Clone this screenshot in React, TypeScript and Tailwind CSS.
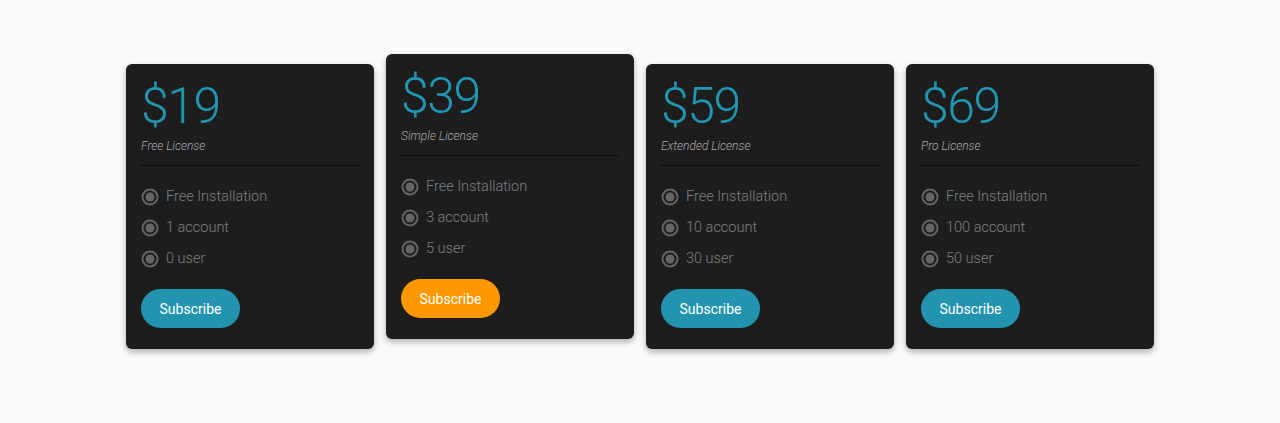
const plans = [
  { price: "$19", name: "Free License", items: ["Free Installation", "1 account", "0 user"], featured: false },
  { price: "$39", name: "Simple License", items: ["Free Installation", "3 account", "5 user"], featured: true },
  { price: "$59", name: "Extended License", items: ["Free Installation", "10 account", "30 user"], featured: false },
  { price: "$69", name: "Pro License", items: ["Free Installation", "100 account", "50 user"], featured: false },
];

function Radio() {
  return (
    <svg width="18" height="18" viewBox="0 0 18 18" className="shrink-0">
      <circle cx="9" cy="9" r="7.5" fill="none" stroke="#666" strokeWidth="2" />
      <circle cx="9" cy="9" r="4.5" fill="#666" />
    </svg>
  );
}

export default function App() {
  return (
    <div className="min-h-[423px] w-full bg-[#fafafa] font-['Roboto',sans-serif]">
      <div className="flex items-start justify-center gap-3 pt-16">
        {plans.map(({ price, name, items, featured }) => (
          <div
            key={price}
            className={`w-[248px] h-[285px] rounded-md bg-[#1d1d1d] px-[15px] pt-[14px] shadow-[0_3px_6px_rgba(0,0,0,0.3)] ${
              featured ? "-mt-[10px]" : ""
            }`}
          >
            {/* price */}
            <div className="text-[50px] font-light leading-[56px] text-[#2196b3] tracking-[-1.5px]">
              {price}
            </div>
            <div className="mt-[4px] text-[12px] italic font-light leading-[16px] text-[#aaa]">
              {name}
            </div>
            <div className="mt-[11px] h-px bg-[#0c0c0c]" />

            {/* features */}
            <ul className="mt-[22px] flex flex-col gap-[13px]">
              {items.map((item) => (
                <li key={item} className="flex items-center gap-[7px] text-[14.5px] font-light leading-[18px] text-[#808080]">
                  <Radio />
                  {item}
                </li>
              ))}
            </ul>

            <button
              className={`mt-[21px] h-[39px] w-[99px] rounded-full pt-[2px] text-[14px] text-white ${
                featured ? "bg-[#ff9800]" : "bg-[#2394b0]"
              }`}
            >
              Subscribe
            </button>
          </div>
        ))}
      </div>
    </div>
  );
}
